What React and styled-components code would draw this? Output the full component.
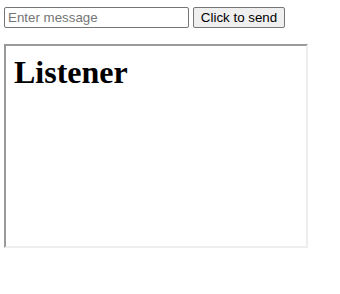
import styled, { createGlobalStyle } from "styled-components"

const Global = createGlobalStyle`
    body {
        margin: 0;
        background: #ffffff;
    }
`

export default function App(){
    return(
        <Page>
            <Global />
            <Sender>
                <MessageInput placeholder="Enter message" />
                <SendButton>Click to send</SendButton>
            </Sender>
            <Frame>
                <Title>Listener</Title>
            </Frame>
        </Page>
    )
}

const Page = styled.div`
    display: flex;
    flex-direction: column;
    padding: 7px 4px;
`

const Sender = styled.div`
    display: flex;
    gap: 4px;
    height: 21px;
`

const MessageInput = styled.input`
    box-sizing: border-box;
    width: 185px;
    height: 21px;
    padding: 1px 3px;
    border: 1px solid #767676;
    border-radius: 2px;
    font-family: "Liberation Sans", Arial, sans-serif;
    font-size: 13.33px;
    color: #000;
    outline: none;

    &::placeholder {
        color: #757575;
    }
`

const SendButton = styled.button`
    box-sizing: border-box;
    width: 92px;
    height: 21px;
    padding: 1px 6px;
    border: 1px solid #767676;
    border-radius: 2px;
    background: #efefef;
    font-family: "Liberation Sans", Arial, sans-serif;
    font-size: 13.33px;
    color: #000;
`

const Frame = styled.div`
    box-sizing: border-box;
    width: 304px;
    height: 204px;
    margin-top: 16px;
    padding: 8px;
    border-style: solid;
    border-width: 2px;
    border-color: #9a9a9a #eeeeee #eeeeee #9a9a9a;
`

const Title = styled.h1`
    margin: 0;
    font-family: "Liberation Serif", "Times New Roman", serif;
    font-size: 32px;
    font-weight: bold;
    color: #000;
`
